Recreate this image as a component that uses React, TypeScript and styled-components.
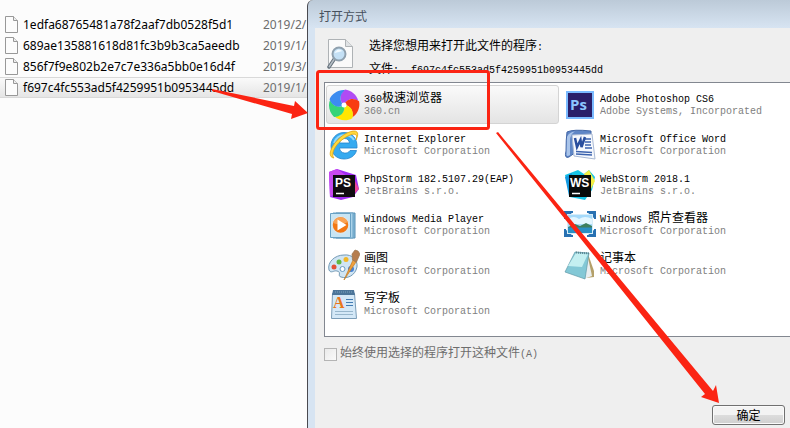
import React from 'react';
import styled, { createGlobalStyle } from 'styled-components';

const GlobalStyle = createGlobalStyle`
  *, *::before, *::after { box-sizing: border-box; }
  html, body, #root { height: 100%; }
  body { margin: 0; overflow: hidden; background: #fcfcfc; }
`;

const Screen = styled.main`
  position: relative;
  display: flex;
  min-height: 100%;
  overflow: hidden;
  font-family: 'Liberation Mono', 'Noto Sans CJK SC', monospace;
  font-size: 12px;
  color: #000;
`;

const FilePane = styled.section`
  flex: 0 0 307px;
  padding-top: 14px;
  overflow: hidden;
  font-family: 'Noto Sans', sans-serif;
`;

const FileRow = styled.div<{ $selected?: boolean }>`
  display: grid;
  grid-template-columns: 19px 240px 1fr;
  align-items: center;
  height: 21px;
  padding-left: 4px;
  border: 1px solid ${p => (p.$selected ? '#d9d9d9' : 'transparent')};
  border-width: 1px 0;
  background: ${p => (p.$selected ? 'linear-gradient(#fafafa, #e5e5e5)' : 'none')};
  line-height: 18px;
  white-space: nowrap;
`;

const FileDate = styled.span`
  color: #6d6d6d;
`;

const Dialog = styled.section`
  display: flex;
  flex: 1;
  flex-direction: column;
  min-width: 0;
  padding-left: 7px;
  overflow: hidden;
  border-left: 1px solid #4a4a50;
  border-top-left-radius: 6px;
  background: linear-gradient(#bccad8, #d7e4f2 28px);
`;

const TitleBar = styled.h1`
  height: 28px;
  margin: 0;
  padding: 6px 0 0 4px;
  font: 400 12px/20px 'Noto Sans CJK SC', sans-serif;
  color: #47505c;
`;

const DialogBody = styled.div`
  display: flex;
  flex: 1;
  flex-direction: column;
  padding: 8px 0 3px 9px;
  background: #efefef;
`;

const Header = styled.header`
  display: flex;
  gap: 10px;
  height: 46px;
  padding-left: 3px;
`;

const HeaderText = styled.div`
  line-height: 23px;
  white-space: pre;
`;

const Line = styled.div``;

const Latin = styled.span`
  font-size: 10px;
`;

const ProgramList = styled.div`
  display: grid;
  grid-template-columns: 233px 233px;
  grid-auto-rows: 40px;
  column-gap: 3px;
  height: 255px;
  padding: 2px 0 0 1px;
  overflow: hidden;
  border: 1px solid #828790;
  border-right: 0;
  background: #fff;
`;

const Tile = styled.button<{ $selected?: boolean }>`
  display: flex;
  align-items: center;
  gap: 4px;
  height: 39px;
  padding: 0 1px;
  border: 1px solid ${p => (p.$selected ? '#d4d4d4' : 'transparent')};
  border-radius: 3px;
  background: ${p => (p.$selected ? 'linear-gradient(#fafafa, #e4e4e4)' : 'none')};
  font: inherit;
  color: inherit;
  text-align: left;
  white-space: pre;
`;

const TileText = styled.span`
  display: grid;
  grid-template-rows: 13px 12px;
  padding-top: 2px;
  line-height: 12px;
`;

const Vendor = styled.span`
  font-size: 10px;
  color: #808080;
`;

const Always = styled.label`
  display: flex;
  align-items: center;
  gap: 3px;
  margin-top: 8px;
  line-height: 18px;
  color: #6d6d6d;
`;

const CheckBox = styled.input`
  width: 13px;
  height: 13px;
  margin: 0;
  appearance: none;
  border: 1px solid #b4b4b4;
  background: linear-gradient(135deg, #eaeaea, #fafafa);
`;

const Footer = styled.footer`
  display: flex;
  justify-content: flex-end;
  margin-top: auto;
  padding-right: 5px;
`;

const OkButton = styled.button`
  width: 73px;
  height: 20px;
  padding: 0;
  border: 1px solid #707070;
  border-radius: 3px;
  background: linear-gradient(#f3f3f3 48%, #dddddd 50%, #cfcfcf);
  box-shadow: inset 0 0 0 1px #fafafa;
  font: 12px/18px 'Noto Sans CJK SC', sans-serif;
  color: #000;
`;

const Annotations = styled.svg`
  position: absolute;
  top: 0;
  left: 0;
  pointer-events: none;
`;

const FileIcon = () => (
  <svg width="14" height="17" viewBox="0 0 14 17">
    <path d="M1.5 .5h8l4 4v12h-12z" fill="#fcfcfc" stroke="#989898" />
    <path d="M9.5 .5v4h4" fill="#eee" stroke="#989898" />
  </svg>
);

const SearchFileIcon = () => (
  <svg width="32" height="34" viewBox="0 0 32 34">
    <path d="M1.500 3.500h17l7 7v21h-24z" fill="#fafafa" stroke="#aeb2b5" />
    <path d="M18.500 3.500v7h7" fill="#dfe2e4" stroke="#aeb2b5" />
    <path d="M8 22L2 31" stroke="#65717c" strokeWidth="3.500" strokeLinecap="round" />
    <path d="M8 22L2 31" stroke="#b5bec5" strokeWidth="1.500" />
    <circle cx="12" cy="18" r="6.500" fill="#c4e0f5" stroke="#8fa0ae" strokeWidth="2" />
    <path d="M7.500 17q3-6 8-2q-3 1-8 2z" fill="#f2faff" />
  </svg>
);

const PETALS = ['#b04cf4', '#f83c12', '#ffe600', '#35d478', '#3c8cf0'];

const Browser360Icon = () => (
  <svg width="32" height="32" viewBox="0 0 32 32">
    {PETALS.map((color, i) => (
      <path
        key={color}
        d="M16 16C11 12 11 5 17 .5C23 1 29 6 30.3 12C24.9 8.500 18.3 10 16 16z"
        fill={color}
        transform={`rotate(${i * 72} 16 16)`}
      />
    ))}
    <circle cx="16" cy="16" r="2.500" fill="#fff" />
  </svg>
);

const ExplorerIcon = () => (
  <svg width="32" height="32" viewBox="0 0 32 32">
    <path
      fillRule="evenodd"
      d="M16 3.500C25 3.500 29.500 10 29 19H11.500C12 25 20 25.500 22 21.500H28.500C27 27 22 30 16 30C8 30 3 24 3 17S8 3.500 16 3.500zM11.500 14H21.500C21 8 12.500 8 11.500 14z"
      fill="#35aaf0"
      stroke="#2484cc"
      strokeWidth=".8"
    />
    <path d="M6 14Q9 6 17 6Q23 6 26 11" fill="none" stroke="#8fd8fc" strokeWidth="2" />
    <path d="M6 29C-3 28 5 11 19 4C29-.500 32 3 28 11C30 5 27 3.500 20 7C8 13 2 25 6 29z" fill="#ffd93c" stroke="#e0a210" strokeWidth=".8" />
  </svg>
);

const PhpStormIcon = () => (
  <svg width="32" height="32" viewBox="0 0 32 32">
    <path d="M1 3L9 0L28 6L31 20L25 28L13 31L2 28z" fill="#a02cf5" />
    <path d="M1 3L9 0L19 7L6 25L2 28z" fill="#c849f0" />
    <path d="M24 6L31 20L23 28z" fill="#ed4898" />
    <rect x="5" y="6" width="22" height="22" fill="#100c12" />
    <text x="7" y="18" fill="#fff" fontFamily="Liberation Sans, sans-serif" fontWeight="700" fontSize="12">PS</text>
    <path d="M8 24.500h8" stroke="#fff" strokeWidth="1.500" />
  </svg>
);

const WebStormIcon = () => (
  <svg width="32" height="32" viewBox="0 0 32 32">
    <path d="M1 6L14 1L20 5L25 1L31 8L28 21L21 31L6 28z" fill="#17c5e8" />
    <path d="M20 5L25 1L31 12L27 20z" fill="#f4ef45" />
    <path d="M1 8L8 4V27L5 27z" fill="#1499e0" />
    <rect x="5" y="6" width="22" height="22" fill="#080c0c" />
    <text x="6" y="18" fill="#fff" fontFamily="Liberation Sans, sans-serif" fontWeight="700" fontSize="12">WS</text>
    <path d="M8 24.500h8" stroke="#fff" strokeWidth="1.500" />
  </svg>
);

const MediaPlayerIcon = () => (
  <svg width="32" height="32" viewBox="0 0 32 32">
    <path d="M8 4h19v25H8z" fill="#85b9d8" stroke="#5690b5" />
    <path d="M5 4h20v25H5z" fill="#aad3ea" stroke="#68a1c4" />
    <path d="M2.500 4.500h20v24h-20z" fill="#c8e5f4" stroke="#68a1c4" />
    <circle cx="12.500" cy="16" r="8.500" fill="#f27713" stroke="#d8e6ed" strokeWidth="1.500" />
    <path d="M5 14a8 8 0 0 1 15-1q-7 4-15 1z" fill="#f9a252" />
    <path d="M9.500 10.500v11l9-5.500z" fill="#fff" />
  </svg>
);

const PaintIcon = () => (
  <svg width="32" height="32" viewBox="0 0 32 32">
    <path
      d="M1 21C-1 13 7 6 16 6C24 5 30 11 29 18C27 27 19 30 13 28C9 27 14 23 9 22C6 21 3 25 1 21z"
      fill="#d0e5f4"
      stroke="#7299b5"
    />
    <circle cx="14.500" cy="20" r="2.500" fill="#fff" stroke="#6a9abf" />
    <circle cx="6" cy="18" r="2.500" fill="#e34f36" />
    <circle cx="11" cy="13" r="2.500" fill="#60b842" />
    <circle cx="18" cy="10.500" r="2.500" fill="#f2b728" />
    <circle cx="23" cy="20" r="3" fill="#4681d3" />
    <path d="M16 31L25 11L28 13z" fill="#f0a03c" stroke="#c07a22" strokeWidth=".7" />
    <path d="M24.500 11L24 5L27 1L30 2L32 5L28.500 13z" fill="#b67d4e" stroke="#9a7550" strokeWidth=".7" />
  </svg>
);

const WordPadIcon = () => (
  <svg width="32" height="32" viewBox="0 0 32 32">
    <path d="M4.500 4.500h22l2 25h-25z" fill="#d4e8f7" stroke="#7b9db8" />
    <path d="M5 1h21l1 5H4z" fill="#4c7599" />
    <path d="M7 3h18" stroke="#7fa5c0" strokeDasharray="1 1" />
    <text x="5" y="19" fill="#e9761b" fontFamily="Liberation Serif, serif" fontWeight="700" fontSize="16">A</text>
    <path d="M18 10.500h7M18 13.500h7M18 16.500h7" stroke="#427bb3" />
    <path d="M7 22.500h18M7 25.500h18" stroke="#97b6cc" />
  </svg>
);

const PhotoshopIcon = () => (
  <svg width="32" height="32" viewBox="0 0 32 32">
    <rect x="2" y="2" width="28" height="28" fill="#7abaff" />
    <rect x="4" y="4" width="24" height="24" fill="#291e69" />
    <text x="6" y="21" fill="#8cc6ff" fontFamily="Open Sans, sans-serif" fontWeight="700" fontSize="15">Ps</text>
  </svg>
);

const WordIcon = () => (
  <svg width="32" height="32" viewBox="0 0 32 32">
    <path d="M3 3Q9 0 27 2V22Q14 20 5 28Q0 30 2 22Q2 10 3 3z" fill="#5f86c6" stroke="#4266a6" />
    <path d="M3 8Q5 3 11 2.500Q6 5 6 12V26Q3 28 2.500 26z" fill="#a9c4ea" />
    <path d="M8 6L28 5L31 30L10 27z" fill="#f6f9fe" stroke="#a9b9d4" />
    <path d="M21 10h6M21 13h6M21 16h6M21 19h7M12 22.500l16 1M12 25l16 1" stroke="#3c63ae" strokeWidth="1.500" />
    <path d="M11 9L13 18L16.500 11L17.500 18L21 8" fill="none" stroke="#2a4f9e" strokeWidth="2.500" />
  </svg>
);

const PhotoViewerIcon = () => (
  <svg width="32" height="32" viewBox="0 0 32 32">
    <path d="M1 10V3h8M23 3h8v7M31 20v7h-8M9 27H1v-7" fill="#2871b2" stroke="#2871b2" strokeWidth="2" />
    <rect x="3.500" y="5.500" width="25" height="19" fill="#a5dafa" stroke="#d6edf9" />
    <path d="M4 10Q10 6 15 10Q21 6 28 10V15H4z" fill="#e3f6ff" />
    <path d="M4 18L11 15L16 17L22 14L28 17V20H4z" fill="#3d7f5e" />
    <path d="M4 18.500h24V24H4z" fill="#2a8fc4" />
  </svg>
);

const NotepadIcon = () => (
  <svg width="32" height="32" viewBox="0 0 32 32">
    <path d="M24 5L30 22V28L22 29z" fill="#b4a06a" />
    <path d="M23 4L28 27L20 30z" fill="#e9eef0" />
    <path d="M11 3L25 4L21 30L1 23z" fill="#83c8d6" stroke="#6099a8" strokeWidth=".7" />
    <path d="M12 4L24 5L18 18L4 17z" fill="#c4eff1" />
    <path d="M12 3.500L25 4.500" stroke="#5d8590" strokeWidth="2" strokeDasharray="1 1" />
  </svg>
);

const FILES = [
  { name: '1edfa68765481a78f2aaf7db0528f5d1', date: '2019/2/' },
  { name: '689ae135881618d81fc3b9b3ca5aeedb', date: '2019/1/' },
  { name: '856f7f9e802b2e7c7e336a5bb0e16d4f', date: '2019/3/' },
  { name: 'f697c4fc553ad5f4259951b0953445dd', date: '2019/1/', selected: true },
];

const PROGRAMS = [
  { latin: '360', name: '极速浏览器', vendor: '360.cn', Icon: Browser360Icon, selected: true },
  { latin: 'Adobe Photoshop CS6', vendor: 'Adobe Systems, Incorporated', Icon: PhotoshopIcon },
  { latin: 'Internet Explorer', vendor: 'Microsoft Corporation', Icon: ExplorerIcon },
  { latin: 'Microsoft Office Word', vendor: 'Microsoft Corporation', Icon: WordIcon },
  { latin: 'PhpStorm 182.5107.29(EAP)', vendor: 'JetBrains s.r.o.', Icon: PhpStormIcon },
  { latin: 'WebStorm 2018.1', vendor: 'JetBrains s.r.o.', Icon: WebStormIcon },
  { latin: 'Windows Media Player', vendor: 'Microsoft Corporation', Icon: MediaPlayerIcon },
  { latin: 'Windows ', name: '照片查看器', vendor: 'Microsoft Corporation', Icon: PhotoViewerIcon },
  { name: '画图', vendor: 'Microsoft Corporation', Icon: PaintIcon },
  { name: '记事本', vendor: 'Microsoft Corporation', Icon: NotepadIcon },
  { name: '写字板', vendor: 'Microsoft Corporation', Icon: WordPadIcon },
];

export default function App() {
  return (
    <Screen>
      <GlobalStyle />
      <FilePane>
        {FILES.map(file => (
          <FileRow key={file.name} $selected={file.selected}>
            <FileIcon />
            <span>{file.name}</span>
            <FileDate>{file.date}</FileDate>
          </FileRow>
        ))}
      </FilePane>
      <Dialog>
        <TitleBar>打开方式</TitleBar>
        <DialogBody>
          <Header>
            <SearchFileIcon />
            <HeaderText>
              <Line>选择您想用来打开此文件的程序<Latin>:</Latin></Line>
              <Line>文件<Latin>:  f697c4fc553ad5f4259951b0953445dd</Latin></Line>
            </HeaderText>
          </Header>
          <ProgramList>
            {PROGRAMS.map(({ latin, name, vendor, Icon, selected }) => (
              <Tile key={`${latin}${name}`} type="button" $selected={selected}>
                <Icon />
                <TileText>
                  <span>
                    {latin && <Latin>{latin}</Latin>}
                    {name}
                  </span>
                  <Vendor>{vendor}</Vendor>
                </TileText>
              </Tile>
            ))}
          </ProgramList>
          <Always>
            <CheckBox type="checkbox" disabled />
            <span>始终使用选择的程序打开这种文件<Latin>(A)</Latin></span>
          </Always>
          <Footer>
            <OkButton type="button">确定</OkButton>
          </Footer>
        </DialogBody>
      </Dialog>
      <Annotations width="790" height="428" viewBox="0 0 790 428" aria-hidden="true">
        <rect x="317.500" y="71.500" width="171" height="57" rx="2" fill="none" stroke="#fb2413" strokeWidth="3" />
        <path d="M212 89L294 106L295 101L308 113L291 119L292 114L212 91z" fill="#fb2413" />
        <path d="M496 133L498 132L713 391L716 385L719 403L701 397L705 394z" fill="#fb2413" />
      </Annotations>
    </Screen>
  );
}
